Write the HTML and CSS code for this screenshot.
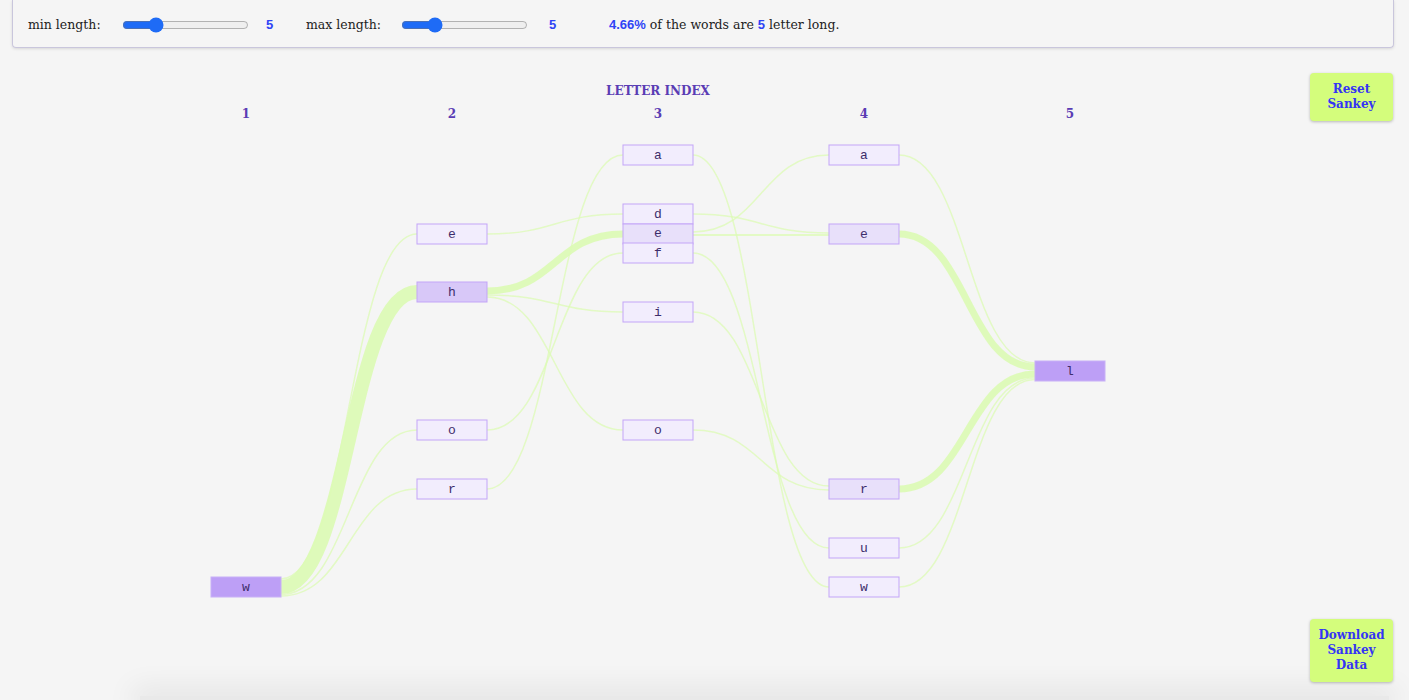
FILE: index.html
```html
<!DOCTYPE html>
<html lang="en">
<head>
    <meta charset="UTF-8">
    <meta name="viewport" content="width=device-width, initial-scale=1.0">
    <title>Letter Sankey</title>
    <link rel="stylesheet" href="styles.css">
</head>
<body>
    <!-- Controls -->
    <div class="controls">
        <label class="ctl-label" for="minLen">min length:</label>
        <input type="range" id="minLen" class="slider" min="2" max="15" value="5">
        <span class="ctl-value">5</span>

        <label class="ctl-label wide" for="maxLen">max length:</label>
        <input type="range" id="maxLen" class="slider" min="2" max="15" value="5">
        <span class="ctl-value last">5</span>

        <p class="summary"><b>4.66%</b> of the words are <b>5</b> letter long.</p>
    </div>

    <div class="main">
        <svg class="sankey" viewBox="0 60 1300 636" width="1300" height="636">
            <g class="axis">
                <text class="axis-title" x="658" y="95">LETTER INDEX</text>
                <text x="246" y="118">1</text>
                <text x="452" y="118">2</text>
                <text x="658" y="118">3</text>
                <text x="864" y="118">4</text>
                <text x="1070" y="118">5</text>
            </g>

            <g class="links">
                <!-- 1 -> 2 -->
                <path d="M281,579 C349,579 349,234 417,234" stroke-width="1.5"/>
                <path class="thick" d="M281,587 C349,587 349,292 417,292" stroke-width="14"/>
                <path d="M281,594.5 C349,594.5 349,430 417,430" stroke-width="1.5"/>
                <path d="M281,596 C349,596 349,489 417,489" stroke-width="1.5"/>
                <!-- 2 -> 3 -->
                <path d="M487,234 C555,234 555,214 623,214" stroke-width="1.5"/>
                <path class="thick" d="M487,291 C555,291 555,234 623,234" stroke-width="7"/>
                <path d="M487,295 C555,295 555,312 623,312" stroke-width="1.5"/>
                <path d="M487,297 C555,297 555,430 623,430" stroke-width="1.5"/>
                <path d="M487,430 C555,430 555,253 623,253" stroke-width="1.5"/>
                <path d="M487,489 C555,489 555,155 623,155" stroke-width="1.5"/>
                <!-- 3 -> 4 -->
                <path d="M693,155 C761,155 761,587 829,587" stroke-width="1.5"/>
                <path d="M693,214 C761,214 761,233 829,233" stroke-width="1.5"/>
                <path d="M693,232 C761,232 761,155 829,155" stroke-width="1.5"/>
                <path d="M693,235 C761,235 761,235 829,235" stroke-width="2"/>
                <path d="M693,253 C761,253 761,548 829,548" stroke-width="1.5"/>
                <path d="M693,312 C761,312 761,486 829,486" stroke-width="1.5"/>
                <path d="M693,430 C761,430 761,490 829,490" stroke-width="1.5"/>
                <!-- 4 -> 5 -->
                <path d="M899,155 C967,155 967,363 1035,363" stroke-width="1.5"/>
                <path class="thick" d="M899,234 C967,234 967,367 1035,367" stroke-width="7"/>
                <path class="thick" d="M899,489 C967,489 967,374 1035,374" stroke-width="7"/>
                <path d="M899,548 C967,548 967,378 1035,378" stroke-width="1.5"/>
                <path d="M899,587 C967,587 967,379.5 1035,379.5" stroke-width="1.5"/>
            </g>

            <g class="nodes">
                <rect class="node strong" x="211" y="577" width="70" height="20"/>
                <text x="246" y="591">w</text>

                <rect class="node" x="417" y="224" width="70" height="20"/>
                <text x="452" y="238">e</text>
                <rect class="node mid" x="417" y="282" width="70" height="20"/>
                <text x="452" y="296">h</text>
                <rect class="node" x="417" y="420" width="70" height="20"/>
                <text x="452" y="434">o</text>
                <rect class="node" x="417" y="479" width="70" height="20"/>
                <text x="452" y="493">r</text>

                <rect class="node" x="623" y="145" width="70" height="20"/>
                <text x="658" y="159">a</text>
                <rect class="node" x="623" y="204" width="70" height="20"/>
                <text x="658" y="218">d</text>
                <rect class="node light" x="623" y="224" width="70" height="20"/>
                <text x="658" y="237">e</text>
                <rect class="node" x="623" y="243" width="70" height="20"/>
                <text x="658" y="257">f</text>
                <rect class="node" x="623" y="302" width="70" height="20"/>
                <text x="658" y="316">i</text>
                <rect class="node" x="623" y="420" width="70" height="20"/>
                <text x="658" y="434">o</text>

                <rect class="node" x="829" y="145" width="70" height="20"/>
                <text x="864" y="159">a</text>
                <rect class="node light" x="829" y="224" width="70" height="20"/>
                <text x="864" y="238">e</text>
                <rect class="node light" x="829" y="479" width="70" height="20"/>
                <text x="864" y="493">r</text>
                <rect class="node" x="829" y="538" width="70" height="20"/>
                <text x="864" y="552">u</text>
                <rect class="node" x="829" y="577" width="70" height="20"/>
                <text x="864" y="591">w</text>

                <rect class="node strong" x="1035" y="361" width="70" height="20"/>
                <text x="1070" y="375">l</text>
            </g>
        </svg>

        <div class="side">
            <button class="btn">Reset<br>Sankey</button>
            <button class="btn">Download<br>Sankey<br>Data</button>
        </div>
    </div>

    <div class="footer-panel"></div>
</body>
</html>
```

FILE: styles.css
```css
body {
    margin: 0;
    background-color: #f5f5f5;
    font-family: "DejaVu Serif", "Liberation Serif", serif;
    color: #222;
    overflow: hidden;
}

/* Top control bar */
.controls {
    display: flex;
    align-items: center;
    height: 48px;
    margin: 0 15px 0 12px;
    padding: 2px 15px 0;
    box-sizing: border-box;
    border: 1px solid #c9c6dc;
    border-top: none;
    border-radius: 0 0 4px 4px;
    box-shadow: 0 1px 3px rgba(0,0,0,0.12);
    font-size: 12.5px;
}

.ctl-label {
    width: 94px;
    flex: none;
}

.ctl-label.wide {
    width: 95px;
}

.slider {
    width: 127px;
    margin: 0;
    flex: none;
    accent-color: #1e6bf6;
}

.ctl-value {
    width: 40px;
    margin-left: 17px;
    flex: none;
    font-family: "Liberation Sans", Arial, sans-serif;
    font-weight: bold;
    font-size: 13px;
    color: #2f44f5;
}

.ctl-value.last {
    width: 60px;
    margin-left: 21px;
}

.summary {
    margin: 0;
}

.summary b {
    font-family: "Liberation Sans", Arial, sans-serif;
    font-size: 13px;
    color: #2f44f5;
}

/* Chart area */
.main {
    display: flex;
    margin-top: 12px;
    height: 636px;
}

.sankey {
    display: block;
    flex: none;
}

.axis text {
    font-family: "DejaVu Serif", serif;
    font-size: 12px;
    font-weight: bold;
    fill: #5a3cb4;
    text-anchor: middle;
}

.links path {
    fill: none;
    stroke: #dcfbb4;
    stroke-opacity: 0.75;
}

.links path.thick {
    stroke-opacity: 0.9;
}

.node {
    fill: #f2edfd;
    stroke: #c3a5f8;
    stroke-width: 1;
}

.node.light {
    fill: #e8e0fa;
}

.node.mid {
    fill: #d8c8f8;
}

.node.strong {
    fill: #bd9ff6;
    stroke: #c8b0f7;
}

.nodes text {
    font-family: "Liberation Mono", "Courier New", monospace;
    font-size: 13px;
    fill: #3d2d6b;
    text-anchor: middle;
}

.side {
    display: flex;
    flex-direction: column;
    justify-content: space-between;
    margin-left: auto;
    padding: 13px 16px 14px 0;
}

.btn {
    width: 83px;
    padding: 9px 4px;
    background-color: #d4fd7c;
    border: none;
    border-radius: 4px;
    box-shadow: 0 1px 3px rgba(0,0,0,0.25);
    font-family: "DejaVu Serif", serif;
    font-weight: bold;
    font-size: 12px;
    line-height: 15px;
    color: #3434f5;
    cursor: pointer;
}

.footer-panel {
    height: 4px;
    margin: 0 20px 0 140px;
    background-color: #e9e9e9;
    box-shadow: 0 0 28px 8px rgba(0,0,0,0.08);
}
```
